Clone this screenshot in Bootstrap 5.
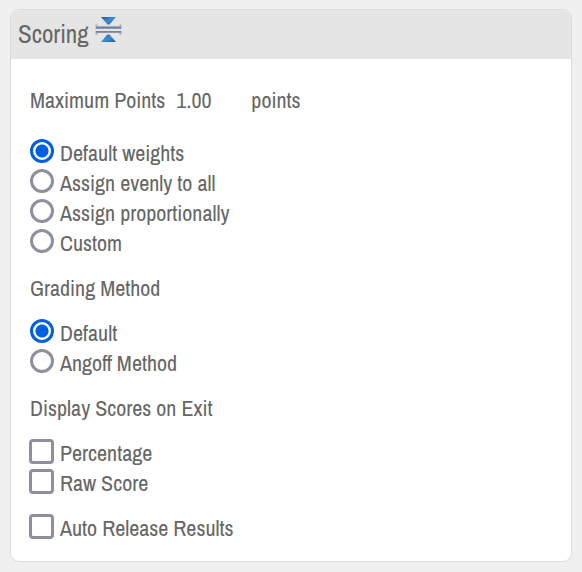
<!DOCTYPE html>
<html lang="en">
<head>
<meta charset="utf-8">
<meta name="viewport" content="width=device-width, initial-scale=1">
<title>Scoring</title>
<link href="https://cdn.jsdelivr.net/npm/bootstrap@5.3.0/dist/css/bootstrap.min.css" rel="stylesheet">
<style>
body { background: #f0f0f0; color: #666; font: 22px/28px "Archivo Narrow", "Liberation Sans Narrow", "Liberation Sans", sans-serif; padding: 9px 10px 10px; }
.panel { --bs-card-border-color: #dcdcdc; --bs-card-border-radius: 9px; --bs-card-inner-border-radius: 8px; color: inherit; }
.panel-top { background: #e5e5e5; border: 0; padding: 7px; gap: 6px; height: 49px; }
.panel-top h1 { font-size: 25px; line-height: 34px; font-weight: 400; }
.panel-content { padding: 27px 18px 17px; }
.group { margin-bottom: 15px; }
.points-row { margin-bottom: 25px; padding-left: 1px; gap: 11px; }
.points { width: 64px; border: 0; padding: 0; color: inherit; background: transparent; line-height: 28px; height: 28px; }
.option { gap: 6px; min-height: 30px; }
.option .form-check-input { width: 25px; height: 25px; margin: 0; border: 3px solid #8f8f9d; border-radius: 4px; background-color: #fff; flex: none; }
.option .form-check-input[type=radio] { width: 24px; height: 24px; margin-left: 1px; border-radius: 50%; }
.option .form-check-input[type=radio]:checked { border-color: #0060df; background: radial-gradient(circle, #0060df 6px, #fff 7px); }
.option .form-check-input[type=checkbox]:checked { background-color: #0060df; border-color: #0060df; }
.section-label { font-size: 22px; line-height: 28px; float: none; margin-bottom: 17px; padding-left: 1px; }
</style>
</head>
<body>
<main class="card panel">
  <div class="card-header panel-top d-flex align-items-start">
    <h1 class="mb-0">Scoring</h1>
    <button type="button" class="btn p-0 border-0 d-flex" aria-label="Collapse Scoring">
      <svg width="27" height="26" viewBox="0 0 27 26" aria-hidden="true">
        <defs><linearGradient id="blue" x1="0" y1="0" x2="1" y2="1"><stop stop-color="#1c5599"/><stop offset=".5" stop-color="#3d8fd2"/><stop offset="1" stop-color="#1b5ba5"/></linearGradient></defs>
        <path d="M6 0H21L14.500 7.500H12.500Z" fill="url(#blue)"/>
        <path d="M6 25H21L14.500 17.500H12.500Z" fill="url(#blue)"/>
        <path d="M0.500 7.500H2.500V9H24.500V7.500H26.500V12H0.500ZM0.500 17.500H2.500V16H24.500V17.500H26.500V14H0.500Z" fill="#a2a9b8"/>
        <path d="M1 10H26V11.500H1ZM1 14H26V15.500H1Z" fill="#78829a"/>
      </svg>
    </button>
  </div>
  <form class="card-body panel-content">
    <div class="points-row d-flex">
      <label for="max">Maximum Points</label>
      <input class="points" id="max" type="text" value="1.00">
      <span>points</span>
    </div>
    <div class="group" role="radiogroup" aria-label="Weights">
      <div class="option d-flex"><input class="form-check-input" type="radio" name="weights" id="w1" checked><label for="w1">Default weights</label></div>
      <div class="option d-flex"><input class="form-check-input" type="radio" name="weights" id="w2"><label for="w2">Assign evenly to all</label></div>
      <div class="option d-flex"><input class="form-check-input" type="radio" name="weights" id="w3"><label for="w3">Assign proportionally</label></div>
      <div class="option d-flex"><input class="form-check-input" type="radio" name="weights" id="w4"><label for="w4">Custom</label></div>
    </div>
    <fieldset class="group">
      <legend class="section-label">Grading Method</legend>
      <div class="option d-flex"><input class="form-check-input" type="radio" name="method" id="m1" checked><label for="m1">Default</label></div>
      <div class="option d-flex"><input class="form-check-input" type="radio" name="method" id="m2"><label for="m2">Angoff Method</label></div>
    </fieldset>
    <fieldset class="group">
      <legend class="section-label">Display Scores on Exit</legend>
      <div class="option d-flex"><input class="form-check-input" type="checkbox" id="s1"><label for="s1">Percentage</label></div>
      <div class="option d-flex"><input class="form-check-input" type="checkbox" id="s2"><label for="s2">Raw Score</label></div>
    </fieldset>
    <div class="option d-flex"><input class="form-check-input" type="checkbox" id="auto"><label for="auto">Auto Release Results</label></div>
  </form>
</main>
<script src="https://cdn.jsdelivr.net/npm/bootstrap@5.3.0/dist/js/bootstrap.bundle.min.js"></script>
</body>
</html>
